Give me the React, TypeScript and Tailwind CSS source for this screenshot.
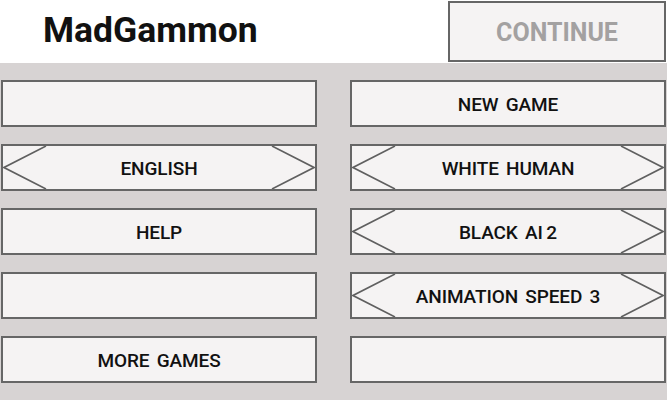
import React from "react";

type Btn = { label?: string; arrows?: boolean };

const Button = ({ label = "", arrows = false }: Btn) => (
  <div className="relative h-[47px] border-2 border-[#666666] bg-[#f5f3f3] flex items-center justify-center">
    {arrows && (
      <svg className="absolute inset-0 w-full h-full" viewBox="0 0 312 43" preserveAspectRatio="none">
        <polyline points="43,0 1,21.5 43,43" fill="none" stroke="#5f5f5f" strokeWidth="1.6" />
        <polyline points="269,0 311,21.5 269,43" fill="none" stroke="#5f5f5f" strokeWidth="1.6" />
      </svg>
    )}
    <span className="relative pt-[3px] whitespace-pre text-[19px] font-medium tracking-[-0.1px] [word-spacing:-1px] text-[#111111] [font-family:Roboto,'Liberation_Sans',sans-serif]">
      {label}
    </span>
  </div>
);

export default function App() {
  const rows: [Btn, Btn][] = [
    [{}, { label: "NEW  GAME" }],
    [{ label: "ENGLISH", arrows: true }, { label: "WHITE  HUMAN", arrows: true }],
    [{ label: "HELP" }, { label: "BLACK  AI 2", arrows: true }],
    [{}, { label: "ANIMATION  SPEED  3", arrows: true }],
    [{ label: "MORE  GAMES" }, {}],
  ];
  return (
    <div className="w-[667px] h-[400px] overflow-hidden flex flex-col bg-[#d7d3d3] [font-family:Roboto,'Liberation_Sans',sans-serif]">
      <div className="h-[63px] bg-white flex items-start justify-between">
        <div className="pl-[43px] pt-[6px] text-[35.5px] font-bold text-[#111111] leading-[48px]">MadGammon</div>
        <div className="mt-px mr-px w-[218px] h-[61px] border-2 border-[#666666] bg-[#f5f3f3] flex items-center justify-center pt-[3px] text-[25px] font-bold text-[#a3a1a1]">
          CONTINUE
        </div>
      </div>
      <div className="grid grid-cols-2 gap-x-[33px] gap-y-[17px] px-px pt-[17px]">
        {rows.flatMap(([a, b], i) => [
          <Button key={`a${i}`} {...a} />,
          <Button key={`b${i}`} {...b} />,
        ])}
      </div>
    </div>
  );
}
